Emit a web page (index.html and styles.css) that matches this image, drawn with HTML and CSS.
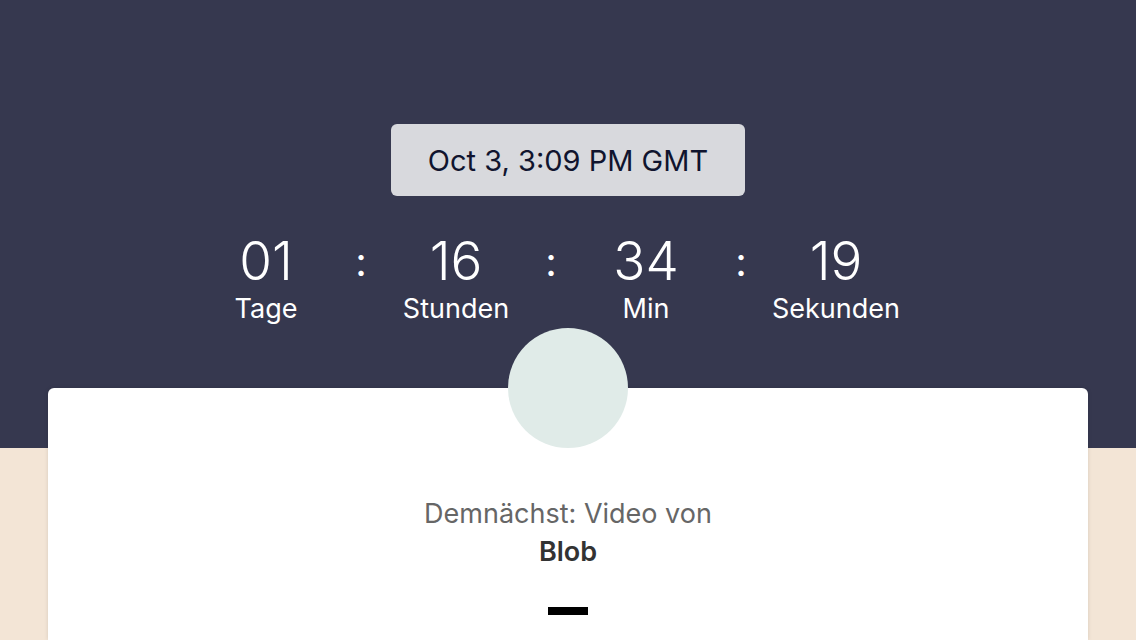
FILE: index.html
```html
<!DOCTYPE html>
<html lang="de">
<head>
<meta charset="utf-8">
<link rel="stylesheet" href="styles.css">
</head>
<body>
<header class="hero">
  <div class="date-badge">Oct 3, 3:09 PM GMT</div>
  <div class="countdown">
    <div class="unit"><span class="num">01</span><span class="label">Tage</span></div>
    <span class="colon">:</span>
    <div class="unit"><span class="num">16</span><span class="label">Stunden</span></div>
    <span class="colon">:</span>
    <div class="unit"><span class="num">34</span><span class="label">Min</span></div>
    <span class="colon">:</span>
    <div class="unit"><span class="num">19</span><span class="label">Sekunden</span></div>
  </div>
</header>
<main class="card">
  <div class="avatar"></div>
  <p class="upcoming">Demnächst: Video von</p>
  <p class="author">Blob</p>
  <div class="bar"></div>
</main>
</body>
</html>
```
FILE: styles.css
```css
html, body {
  margin: 0;
  padding: 0;
}
body {
  background: #f3e5d6;
  font-family: Inter, "Noto Sans", "Liberation Sans", sans-serif;
  height: 640px;
  overflow: hidden;
}
.hero {
  background: #36384f;
  height: 448px;
  box-sizing: border-box;
  padding-top: 124px;
  display: flex;
  flex-direction: column;
  align-items: center;
}
.date-badge {
  width: 354px;
  height: 72px;
  box-sizing: border-box;
  background: #d8d9dd;
  border-radius: 6px;
  color: #10142e;
  font-size: 29px;
  display: flex;
  align-items: center;
  justify-content: center;
}
.countdown {
  margin-top: 35px;
  padding-right: 34px;
  display: flex;
  align-items: flex-start;
  color: #ffffff;
}
.unit {
  width: 150px;
  display: flex;
  flex-direction: column;
  align-items: center;
}
.num {
  font-size: 53px;
  font-weight: 300;
  line-height: 60px;
}
.label {
  font-size: 27px;
  line-height: 32px;
  margin-top: 2px;
}
.colon {
  width: 40px;
  text-align: center;
  font-size: 40px;
  font-weight: 400;
  line-height: 62px;
}
.card {
  margin: -60px 48px 0;
  height: 252px;
  background: #ffffff;
  border-radius: 6px 6px 0 0;
  box-shadow: 0 0 4px rgba(0, 0, 0, 0.12);
  display: flex;
  flex-direction: column;
  align-items: center;
}
.avatar {
  width: 120px;
  height: 120px;
  border-radius: 50%;
  background: #e0ebe8;
  margin-top: -60px;
  flex-shrink: 0;
}
.upcoming {
  margin: 47px 0 0;
  font-size: 27px;
  line-height: 38px;
  color: #666666;
}
.author {
  margin: 0;
  font-size: 27px;
  line-height: 38px;
  font-weight: 600;
  color: #333333;
}
.bar {
  width: 40px;
  height: 8px;
  background: #000000;
  margin-top: 36px;
  flex-shrink: 0;
}
```
